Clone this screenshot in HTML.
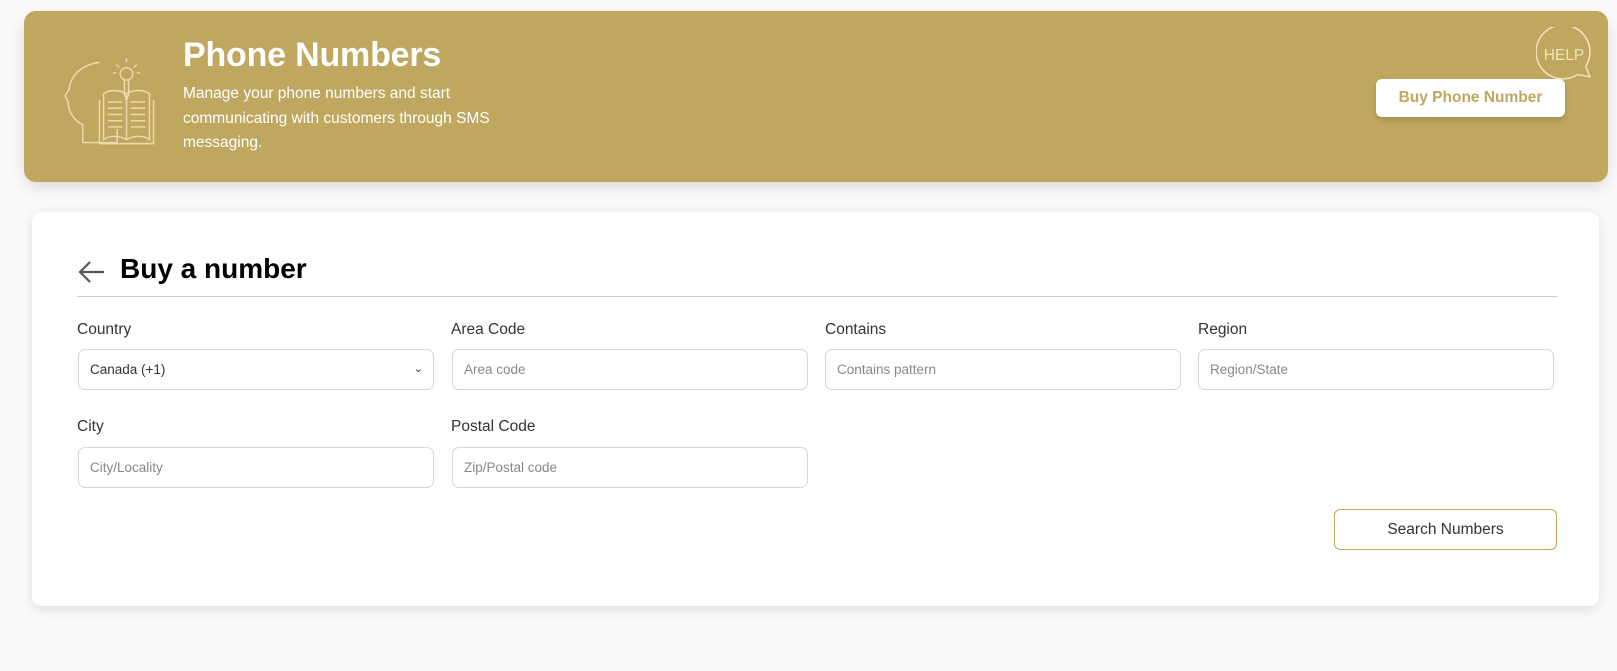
<!DOCTYPE html>
<html><head><style>
body{margin:0;width:1617px;height:671px;background:#fafafa;font-family:"Liberation Sans",sans-serif;position:relative;overflow:hidden}
.banner{position:absolute;left:24px;top:11px;width:1584px;height:171px;background:#bfa75f;border-radius:12px;box-shadow:0 6px 14px rgba(0,0,0,.12)}
.title{position:absolute;left:159px;top:25px;color:#fff;font-weight:bold;font-size:34px;letter-spacing:-0.2px}
.desc{position:absolute;left:159px;top:71px;color:#fff;font-size:15.5px;line-height:24.7px;width:370px}
.bbtn{position:absolute;left:1352px;top:68px;width:189px;height:38px;background:#fff;border-radius:6px;color:#bfa75f;font-weight:bold;font-size:15.5px;text-align:center;line-height:38px;box-shadow:0 3px 6px rgba(0,0,0,.15)}
.card{position:absolute;left:32px;top:212px;width:1567px;height:394px;background:#fff;border-radius:10px;box-shadow:0 3px 12px rgba(0,0,0,.12)}
.h{position:absolute;left:120px;top:253px;font-size:28px;font-weight:bold;color:#000}
.hr{position:absolute;left:45px;top:84px;width:1480px;height:1px;background:#ccc}
.lab{position:absolute;font-size:15.5px;color:#333}
.inp{position:absolute;width:356px;height:41px;border:1px solid #d6d6d6;border-radius:7px;box-sizing:border-box;font-size:13.5px;color:#888;line-height:39px;padding-left:11px}
.sb{position:absolute;left:1302px;top:297px;width:223px;height:41px;border:1px solid #bfa75f;border-radius:6px;box-sizing:border-box;text-align:center;line-height:39px;font-size:15.5px;color:#333}
</style></head><body>
<div class="banner">
<svg style="position:absolute;left:40px;top:36px" width="100" height="112" viewBox="0 0 96 90" fill="none" stroke="#ecd9b2" stroke-width="1.4">
<path d="M18 83V66C10 62 4 54 4 44l-3-6 4-6C6 18 18 8 34 6"/><path d="M18 83h33V70"/>
<path d="M38 36v44c6-4 14-4 22 0 8-4 16-4 22 0V36c-6-4-14-4-22 0-8-4-16-4-22 0z"/><path d="M60 36v44"/>
<path d="M34 42v42h52V42"/>
<path d="M42 44h14M42 50h14M42 56h14M42 62h14M42 68h14M64 44h14M64 50h14M64 56h14M64 62h14M64 68h14"/>
<circle cx="60" cy="17" r="6"/><path d="M58 23v14l2 5 2-5V23"/><path d="M60 2v4M50 8l3 3M70 8l-3 3M47 16h3M70 16h3"/>
</svg>
<div class="title">Phone Numbers</div>
<div class="desc">Manage your phone numbers and start communicating with customers through SMS messaging.</div>
<div class="bbtn">Buy Phone Number</div>
<svg style="position:absolute;left:1512px;top:16px" width="58" height="58" viewBox="0 0 56 56" fill="none" stroke="#f0e2c0" stroke-width="1.5">
<path d="M40 46A26 26 0 1 1 48 38l4 10z"/>
<text x="27" y="32" text-anchor="middle" font-size="15" fill="#f0e2c0" stroke="none" font-family="Liberation Sans">HELP</text>
</svg>
</div>
<div class="card">
<svg style="position:absolute;left:46px;top:48px" width="28" height="24" viewBox="0 0 28 24" fill="none" stroke="#555" stroke-width="2.2"><path d="M26 12H3M12 2L2 12l10 10"/></svg>
<div class="hr"></div>
<div class="lab" style="left:45px;top:109px">Country</div>
<div class="lab" style="left:419px;top:109px">Area Code</div>
<div class="lab" style="left:793px;top:109px">Contains</div>
<div class="lab" style="left:1166px;top:109px">Region</div>
<div class="inp" style="left:46px;top:137px;color:#333">Canada (+1)<span style="position:absolute;right:10px;top:0;font-size:11px">⌄</span></div>
<div class="inp" style="left:420px;top:137px">Area code</div>
<div class="inp" style="left:793px;top:137px">Contains pattern</div>
<div class="inp" style="left:1166px;top:137px">Region/State</div>
<div class="lab" style="left:45px;top:206px">City</div>
<div class="lab" style="left:419px;top:206px">Postal Code</div>
<div class="inp" style="left:46px;top:235px">City/Locality</div>
<div class="inp" style="left:420px;top:235px">Zip/Postal code</div>
<div class="sb">Search Numbers</div>
</div>
<div class="h">Buy a number</div>
</body></html>
